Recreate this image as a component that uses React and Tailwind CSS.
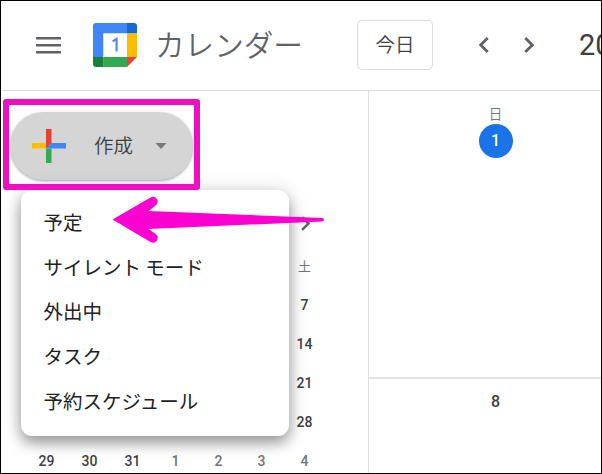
const menuItems = ['予定', 'サイレント モード', '外出中', 'タスク', '予約スケジュール'];
const saturdays = ['7', '14', '21', '28'];
const lastWeek = ['29', '30', '31', '1', '2', '3', '4'];

function CalendarLogo() {
  return (
    <svg className="ml-[32px] h-[44px] w-[44px] shrink-0" viewBox="0 0 44 44">
      <path d="M3 0H34V10.500H10.500V34H0V3Q0 0 3 0Z" fill="#4285f4" />
      <path d="M34 0H41Q44 0 44 3V10.500H34Z" fill="#1967d2" />
      <path d="M34 10.500H44V34H34Z" fill="#fbbc04" />
      <path d="M10.500 34H34V44H10.500Z" fill="#34a853" />
      <path d="M0 34H10.500V44H3Q0 44 0 41Z" fill="#188038" />
      <path d="M34 34H44L34 44Z" fill="#ea4335" />
      <path d="M10.500 10.500H34V34H10.500Z" fill="#fff" />
      <path d="M19.700 18.400L23.600 15.900V28.600" fill="none" stroke="#4285f4" strokeWidth="2" />
    </svg>
  );
}

function Chevron({ className, left = false }) {
  return (
    <svg className={className} viewBox="0 0 12 16" fill="none" stroke="#5f6368" strokeWidth="2.8">
      <path d={left ? 'M9.700 1L2.700 8L9.700 15' : 'M2.300 1L9.300 8L2.300 15'} />
    </svg>
  );
}

function Header() {
  return (
    <header className="flex h-[90px] shrink-0 items-center border-b border-[#dadce0] pb-[2px]">
      <svg className="ml-[35px] h-[18px] w-[25px] shrink-0" viewBox="0 0 25 18" fill="#5f6368">
        <path d="M0 1H25V3.600H0ZM0 8H25V10.600H0ZM0 15H25V17.600H0Z" />
      </svg>
      <CalendarLogo />
      <h1 className="ml-[18px] w-[202px] shrink-0 pb-[2px] text-[29.6px] font-[350] leading-[40px] whitespace-nowrap text-[#5f6368]">
        カレンダー
      </h1>
      <button className="flex h-[50px] w-[76px] shrink-0 items-center justify-center rounded-[5px] border border-[#dadce0] pb-[2px] text-[19.500px] font-[350] leading-none text-[#3c4043]">
        今日
      </button>
      <Chevron left className="ml-[45px] h-[16px] w-[12px] shrink-0" />
      <Chevron className="ml-[33px] h-[16px] w-[12px] shrink-0" />
      <span className="ml-[44px] font-[Roboto,sans-serif] text-[29px] leading-[40px] text-[#3c4043]">20</span>
    </header>
  );
}

function CreateButton() {
  return (
    <button className="ml-[9px] mt-[21px] flex h-[68px] w-[183px] shrink-0 items-center rounded-full bg-[#d5d5d5] shadow-[0_1px_3px_rgba(0,0,0,0.35)]">
      <svg className="ml-[22px] h-[34px] w-[34px] shrink-0" viewBox="0 0 34 34">
        <path d="M14 0H19.500V14L14 19.500Z" fill="#e34133" />
        <path d="M0 14H14V19.500H0Z" fill="#fbbc04" />
        <path d="M14 19.500H19.500V34H14Z" fill="#34a853" />
        <path d="M19.500 14H34V19.500H14Z" fill="#4285f4" />
      </svg>
      <span className="ml-[28px] pb-[3px] text-[19.500px] font-[350] leading-none text-[#3c4043]">作成</span>
      <svg className="ml-[22px] h-[7px] w-[12px]" viewBox="0 0 12 7" fill="#777">
        <path d="M0.500 0H11.500L6 6Z" />
      </svg>
    </button>
  );
}

function MiniCalendar() {
  return (
    <div className="ml-[24px] mt-[23px] w-[301px] shrink-0 font-[Roboto,'Noto_Sans_CJK_JP',sans-serif] text-[14px] font-medium text-[#3c4043]">
      <div className="flex h-[44px] items-start justify-end pr-[15px] pt-[13px]">
        <Chevron className="h-[15px] w-[11px]" />
      </div>
      <div className="grid auto-rows-[39px] grid-cols-7 items-center text-center">
        <span className="col-start-7 text-[13px] font-normal text-[#70757a]">土</span>
        {saturdays.map((day) => (
          <span key={day} className="col-start-7">{day}</span>
        ))}
        {lastWeek.map((day, i) => (
          <span key={day} className={i > 2 ? 'text-[#70757a]' : ''}>{day}</span>
        ))}
      </div>
    </div>
  );
}

function CreateMenu() {
  return (
    <ul className="absolute left-[20px] top-[189px] h-[246px] w-[268px] rounded-[11px] bg-white pt-[9px] text-[19.500px] text-[#202124] shadow-[0_7px_14px_rgba(0,0,0,0.34),0_2px_22px_rgba(0,0,0,0.15)]">
      {menuItems.map((item) => (
        <li key={item} className="flex h-[44.900px] items-center pl-[22.500px] leading-none whitespace-nowrap">
          {item}
        </li>
      ))}
    </ul>
  );
}

function Annotations() {
  return (
    <>
      <div className="absolute left-[2px] top-[98px] h-[91px] w-[197px] rounded-[3px] border-[6px] border-[#f20cc2]" />
      <svg className="absolute left-[109px] top-[193px] h-[52px] w-[218px]" viewBox="110 194 218 52">
        <path
          d="M112.500 219.500L150.500 197.500C154 195.500 157.500 198.500 157.700 201.500Q157.800 204 155 206L148.500 211L322 218Q324 218.300 324 219.700Q324 221.200 322 221.400L148.500 229L155 233.500Q158 235.500 157.700 238.500C157.200 242 153.500 243.800 150.500 242Z"
          fill="#fb00d0"
        />
      </svg>
    </>
  );
}

export default function App() {
  return (
    <div className="relative flex h-[474px] w-[602px] flex-col overflow-hidden border border-black bg-white font-['Noto_Sans_CJK_JP',sans-serif]">
      <Header />
      <div className="flex min-h-0 flex-1">
        <aside className="flex w-[368px] shrink-0 flex-col overflow-hidden border-r border-[#dadce0]">
          <CreateButton />
          <MiniCalendar />
        </aside>
        <main className="flex min-w-0 flex-1 flex-col font-[Roboto,sans-serif] text-[16px] font-medium">
          <section className="flex h-[288px] shrink-0 flex-col items-center border-b-2 border-[#e2e3e4] pl-[21px] pt-[12px]">
            <span className="font-['Noto_Sans_CJK_JP',sans-serif] text-[13.500px] font-[350] leading-[20px] text-[#70757a]">日</span>
            <span className="mt-px flex h-[34px] w-[34px] items-center justify-center rounded-full bg-[#1a73e8] text-white">1</span>
          </section>
          <section className="flex justify-center pl-[21px] pt-[11px] text-[#3c4043]">8</section>
        </main>
      </div>
      <CreateMenu />
      <Annotations />
    </div>
  );
}
